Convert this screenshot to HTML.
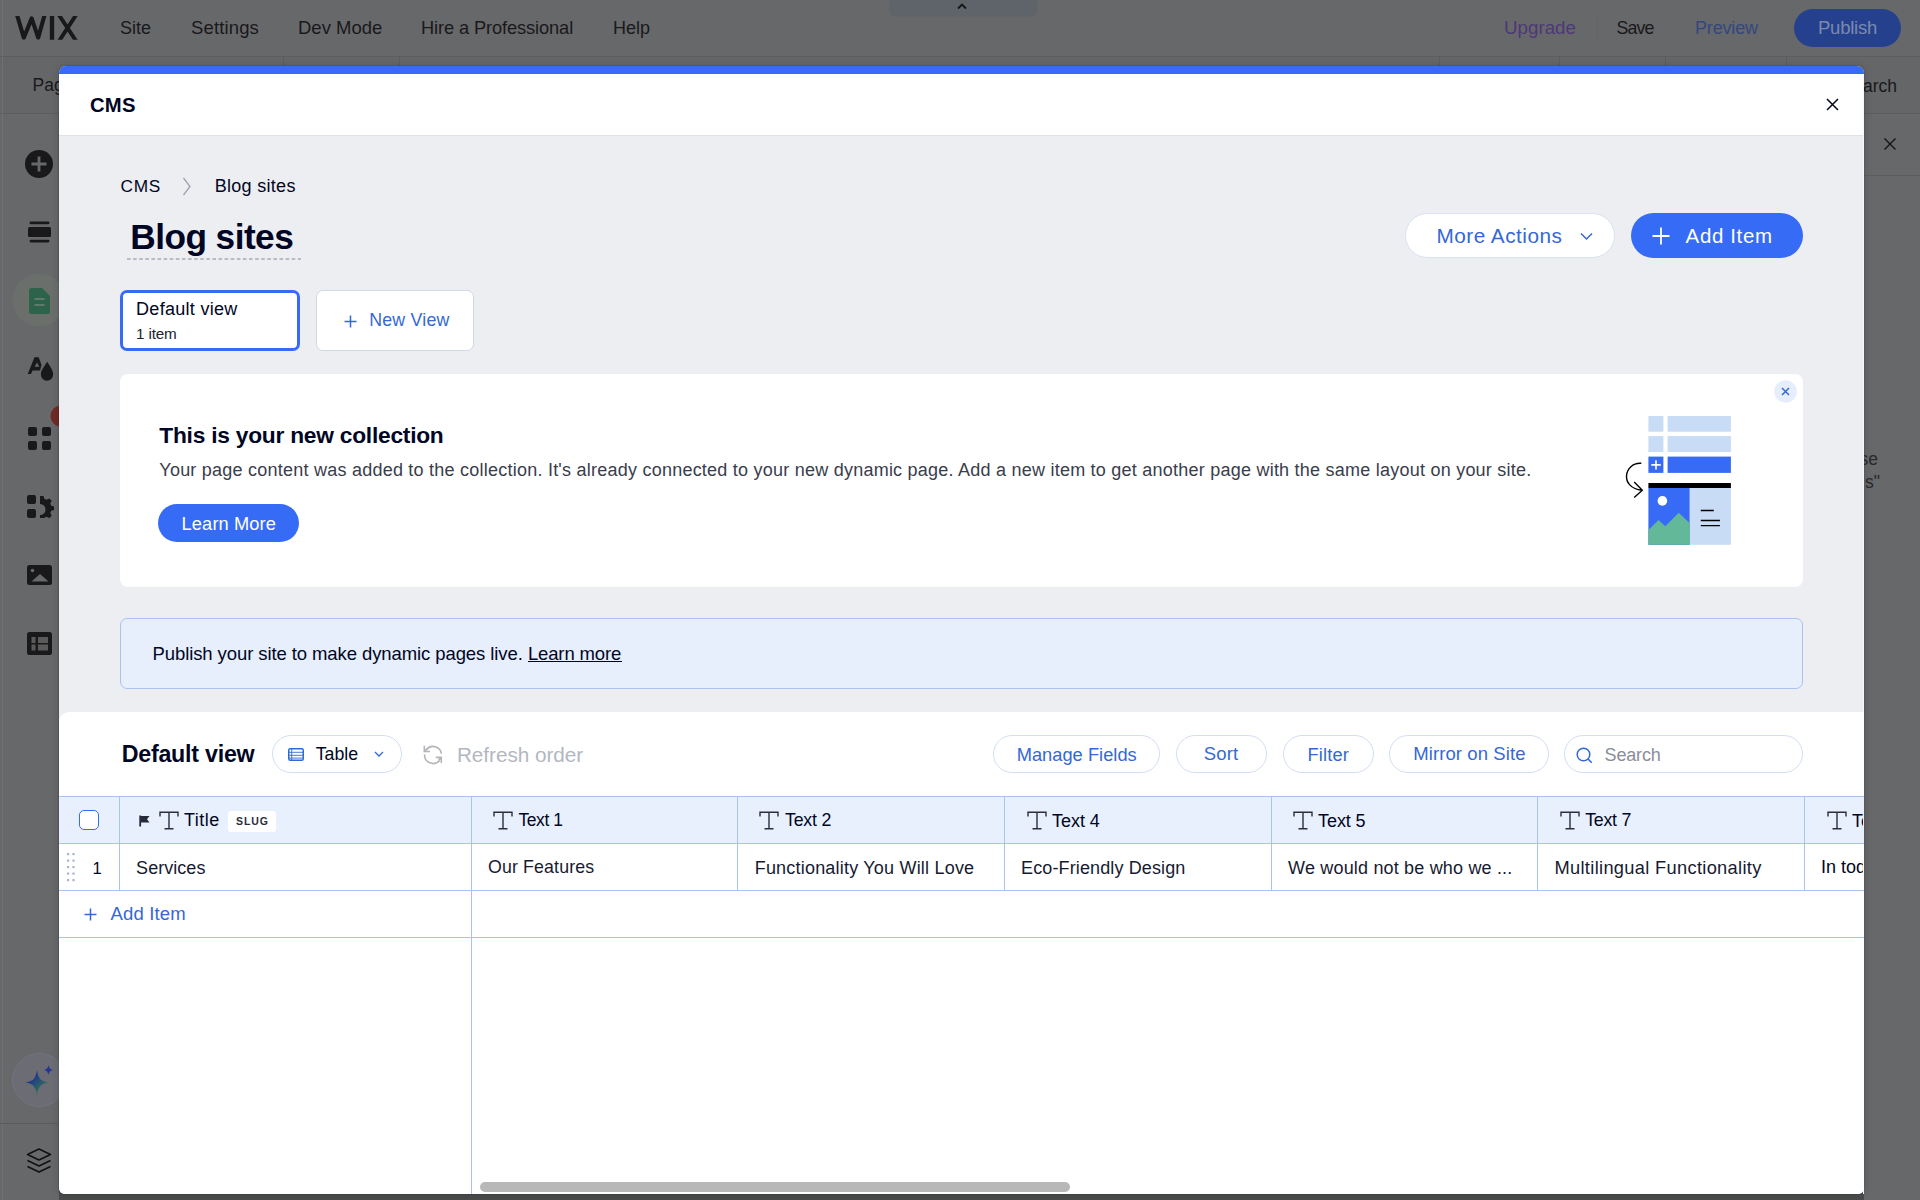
<!DOCTYPE html>
<html><head><meta charset="utf-8"><title>CMS</title>
<style>
*{margin:0;padding:0}
html,body{width:1920px;height:1200px;overflow:hidden}
body{position:relative;background:#6a6a6b;font-family:"Liberation Sans",sans-serif}
.r{position:absolute}
.t{position:absolute;white-space:nowrap;line-height:1}
</style></head><body>
<div class="r" style="left:0px;top:0px;width:1920px;height:1200px;background:#67686a;"></div>
<div class="r" style="left:0px;top:57px;width:1920px;height:56px;background:#656668;"></div>
<div class="r" style="left:0px;top:56px;width:1920px;height:1px;background:#5c5c5d;"></div>
<div class="r" style="left:0px;top:113px;width:1920px;height:1px;background:#5c5c5d;"></div>
<div class="r" style="left:2px;top:0px;width:1px;height:1200px;background:#6f7071;"></div>
<div class="r" style="left:58px;top:114px;width:1px;height:1080px;background:#636364;"></div>
<div class="r" style="left:283px;top:57px;width:1px;height:9px;background:#5c5c5d;"></div>
<div class="r" style="left:399px;top:57px;width:1px;height:9px;background:#5c5c5d;"></div>
<div class="r" style="left:1439px;top:57px;width:1px;height:9px;background:#5c5c5d;"></div>
<div class="r" style="left:1559px;top:57px;width:1px;height:9px;background:#5c5c5d;"></div>
<div class="r" style="left:1665px;top:57px;width:1px;height:9px;background:#5c5c5d;"></div>
<div class="r" style="left:1786px;top:57px;width:1px;height:9px;background:#5c5c5d;"></div>
<div class="r" style="left:1864px;top:175px;width:56px;height:1px;background:#5c5c5d;"></div>
<svg class="r" style="left:0px;top:0px" width="90" height="56"><defs><clipPath id="wc"><rect x="0" y="15.9" width="90" height="23.9"/></clipPath></defs><g clip-path="url(#wc)" stroke="#19191b" fill="none"><path d="M16.4 12.8L23.8 37.7L31.7 18.4L38.2 37.7L45.2 12.8" stroke-width="4.1" stroke-linejoin="round"/><path d="M52 10V45" stroke-width="4.3"/><path d="M57.4 12.6L77.4 43M77.6 12.6L57.8 43" stroke-width="3.9"/></g></svg>
<div class="t" style="left:120.00px;top:19.36px;font-size:18.0px;letter-spacing:0.000px;color:#19191b">Site</div>
<div class="t" style="left:191.00px;top:18.94px;font-size:18.5px;letter-spacing:0.143px;color:#19191b">Settings</div>
<div class="t" style="left:298.00px;top:18.94px;font-size:18.5px;letter-spacing:0.000px;color:#19191b">Dev Mode</div>
<div class="t" style="left:421.00px;top:19.15px;font-size:18.25px;letter-spacing:-0.111px;color:#19191b">Hire a Professional</div>
<div class="t" style="left:613.00px;top:19.36px;font-size:18.0px;letter-spacing:0.000px;color:#19191b">Help</div>
<div class="r" style="left:890px;top:0px;width:147px;height:16px;background:#5f636a;border-radius:0 0 7px 7px;box-shadow:0 0 0 1px #626569"></div>
<svg class="r" style="left:956px;top:2px" width="12" height="8"><path d="M2 6.5L6 2.5l4 4" stroke="#161616" stroke-width="1.8" fill="none"/></svg>
<div class="t" style="left:1504.00px;top:18.83px;font-size:18.75px;letter-spacing:0.000px;color:#4e3878">Upgrade</div>
<div class="r" style="left:1597px;top:12px;width:1px;height:32px;background:#646465;"></div>
<div class="t" style="left:1616.50px;top:19.67px;font-size:17.75px;letter-spacing:-0.833px;color:#19191b">Save</div>
<div class="t" style="left:1695.00px;top:19.46px;font-size:18.0px;letter-spacing:-0.167px;color:#33477e">Preview</div>
<div class="r" style="left:1794px;top:9px;width:107px;height:38px;background:#25418d;border-radius:19px"></div>
<div class="t" style="left:1818.00px;top:19.04px;font-size:18.5px;letter-spacing:-0.250px;color:#7b89b0">Publish</div>
<div class="t" style="left:32.50px;top:77.19px;font-size:17.5px;letter-spacing:0.000px;color:#19191b">Pag</div>
<div class="t" style="left:0.00px;top:77.69px;font-size:17.5px;letter-spacing:0.000px;color:#19191b;left:auto;right:23px">arch</div>
<svg class="r" style="left:1883px;top:137px" width="14" height="14"><path d="M1.5 1.5l11 11M12.5 1.5l-11 11" stroke="#151515" stroke-width="1.4"/></svg>
<div class="t" style="left:0.00px;top:451.19px;font-size:17.5px;letter-spacing:0.000px;color:#2a2a2c;left:auto;right:42px">se</div>
<div class="t" style="left:0.00px;top:474.19px;font-size:17.5px;letter-spacing:0.000px;color:#2a2a2c;left:auto;right:40px">s"</div>
<svg class="r" style="left:25px;top:150px" width="28" height="28"><circle cx="14" cy="14" r="14" fill="#19191b"/><path d="M14 6.5v15M6.5 14h15" stroke="#67686a" stroke-width="2.8"/></svg>
<svg class="r" style="left:28px;top:221px" width="23" height="22"><rect x="1.5" y="0.5" width="20" height="2.8" rx="1.4" fill="#19191b"/><rect x="0" y="6" width="23" height="10" rx="1.5" fill="#19191b"/><rect x="1.5" y="18.7" width="20" height="2.8" rx="1.4" fill="#19191b"/></svg>
<svg class="r" style="left:12px;top:273px" width="47" height="54"><circle cx="27" cy="27" r="26.5" fill="#6a6f6c"/></svg>
<svg class="r" style="left:29px;top:288px" width="21" height="26"><path d="M0 2.5a2.5 2.5 0 0 1 2.5-2.5h10.5l8 8v15.5a2.5 2.5 0 0 1-2.5 2.5h-16a2.5 2.5 0 0 1-2.5-2.5z" fill="#2d634a"/><path d="M5.5 11h10M5.5 17h10" stroke="#5f7a6c" stroke-width="2.2"/></svg>
<svg class="r" style="left:22px;top:350px" width="36" height="36"><path fill-rule="evenodd" d="M5.7 24L12.5 7.2H16.7L19.5 15L18 20.4H10.5L9 24Z M12.6 16.8L15 12.6L17.4 16.8Z" fill="#19191b"/><path d="M25.2 11.8C22 17 18.9 20.2 18.9 24.6A6.1 6.1 0 0 0 31.1 24.6C31.1 20.2 28.4 17 25.2 11.8Z" fill="#19191b"/></svg>
<svg class="r" style="left:50px;top:405px" width="9" height="22"><circle cx="11" cy="11" r="10.5" fill="#702a25"/></svg>
<svg class="r" style="left:28px;top:427px" width="23" height="23"><rect x="0" y="0" width="9" height="9" rx="2" fill="#19191b"/><rect x="14" y="0" width="9" height="9" rx="2" fill="#19191b"/><rect x="0" y="14" width="9" height="9" rx="2" fill="#19191b"/><rect x="14" y="14" width="9" height="9" rx="2" fill="#19191b"/></svg>
<svg class="r" style="left:26px;top:495px" width="28" height="23"><rect x="1" y="0" width="9" height="9" rx="2" fill="#19191b"/><rect x="1" y="14" width="9" height="9" rx="2" fill="#19191b"/><path d="M14 1h3.5l.8 2.8 2.4 1 2.6-1.4 2.4 2.4-1.4 2.6 1 2.4 2.8.8v3.3l-2.8.8-1 2.4 1.4 2.6-2.4 2.4-2.6-1.4-2.4 1-.8 2.8H14v-5.5a5.5 5.5 0 0 0 0-11z" fill="#19191b"/></svg>
<svg class="r" style="left:27px;top:565px" width="25" height="20"><rect x="0" y="0" width="25" height="20" rx="2.5" fill="#19191b"/><path d="M4.5 16.5l8.5-7.5 8.5 7.5z" fill="#67686a"/><circle cx="5.5" cy="5.5" r="1.8" fill="#67686a"/></svg>
<svg class="r" style="left:27px;top:632px" width="25" height="23"><rect x="0" y="0" width="25" height="23" rx="2.5" fill="#19191b"/><rect x="4.5" y="5" width="4" height="6" fill="#5a5a5b"/><rect x="11" y="5" width="10" height="6" fill="#5a5a5b"/><rect x="4.5" y="12.5" width="4" height="6" fill="#5a5a5b"/><rect x="11" y="12.5" width="10" height="6" fill="#5a5a5b"/></svg>
<div class="r" style="left:0px;top:1123px;width:59px;height:1px;background:#5c5c5d;"></div>
<svg class="r" style="left:12px;top:1053px" width="47" height="54"><circle cx="27" cy="27" r="26.5" fill="#6c6d74" stroke="#717380" stroke-width="1"/></svg>
<svg class="r" style="left:24px;top:1064px" width="32" height="34"><defs><linearGradient id="g1" x1="0" y1="0" x2="1" y2="1"><stop offset="0.25" stop-color="#1e2f90"/><stop offset="0.7" stop-color="#2f6a5e"/></linearGradient></defs><path d="M13 6c1.3 8.5 3.6 11 11.5 12.5-7.9 1.5-10.2 4-11.5 12.5-1.3-8.5-3.6-11-11.5-12.5 7.9-1.5 10.2-4 11.5-12.5z" fill="url(#g1)"/><path d="M24.5 1c.7 3.3 1.6 4.3 5 5-3.4.7-4.3 1.7-5 5-.7-3.3-1.6-4.3-5-5 3.4-.7 4.3-1.7 5-5z" fill="#1f3590"/></svg>
<svg class="r" style="left:26px;top:1148px" width="26" height="26"><path d="M1.5 6.5L13 1l11.5 5.5L13 12z" stroke="#111" stroke-width="1.5" fill="none" stroke-linejoin="round"/><path d="M1.5 12.5L13 18l11.5-5.5M1.5 18.5L13 24l11.5-5.5" stroke="#111" stroke-width="1.5" fill="none" stroke-linejoin="round"/></svg>
<div class="r" style="left:59px;top:1190px;width:1805px;height:10px;background:#4a4b4b;"></div>
<div class="r" style="left:59px;top:66px;width:1805px;height:1128px;background:#edeef1;border-radius:7px 7px 6px 6px;overflow:hidden;box-shadow:0 0 1.5px rgba(0,0,0,0.35),0 0 8px rgba(0,0,0,0.15)"></div>
<div class="r" style="left:59px;top:66px;width:1805px;height:9px;background:#356bf5;border-radius:7px 7px 0 0"></div>
<div class="r" style="left:59px;top:74px;width:1805px;height:61px;background:#ffffff;"></div>
<div class="r" style="left:59px;top:135px;width:1805px;height:1px;background:#dfe2e8;"></div>
<div class="r" style="left:1863px;top:75px;width:1px;height:1119px;background:#f6f7f9;"></div>
<div class="t" style="left:90.00px;top:94.86px;font-size:20.25px;letter-spacing:0.250px;color:#000624;font-weight:bold">CMS</div>
<svg class="r" style="left:1826px;top:98px" width="13" height="13"><path d="M1 1l11 11M12 1L1 12" stroke="#000624" stroke-width="1.5"/></svg>
<div class="t" style="left:120.40px;top:177.70px;font-size:17.25px;letter-spacing:0.800px;color:#000624">CMS</div>
<svg class="r" style="left:182px;top:177px" width="10" height="19"><path d="M1.5 1l6.5 8.5-6.5 8.5" stroke="#9ea3b3" stroke-width="1.3" fill="none"/></svg>
<div class="t" style="left:214.70px;top:177.06px;font-size:18.0px;letter-spacing:0.300px;color:#000624">Blog sites</div>
<div class="t" style="left:130.30px;top:219.16px;font-size:35.25px;letter-spacing:-0.556px;color:#000624;font-weight:bold">Blog sites</div>
<svg class="r" style="left:127px;top:258px" width="174" height="2"><line x1="0" y1="1" x2="174" y2="1" stroke="#a7abb9" stroke-width="1.4" stroke-dasharray="3.6 2.5"/></svg>
<div class="r" style="left:1405px;top:213px;width:210px;height:45px;background:#ffffff;border:1px solid #d9e1f3;border-radius:23px;box-sizing:border-box"></div>
<div class="t" style="left:1436.40px;top:226.04px;font-size:20.75px;letter-spacing:0.509px;color:#3468d6">More Actions</div>
<svg class="r" style="left:1580px;top:232px" width="13" height="9"><path d="M1 1.5l5.5 5.5 5.5-5.5" stroke="#3468d6" stroke-width="1.5" fill="none"/></svg>
<div class="r" style="left:1631px;top:213px;width:172px;height:45px;background:#356bf5;border-radius:23px"></div>
<svg class="r" style="left:1652px;top:227px" width="18" height="18"><path d="M9 0.5v17M0.5 9h17" stroke="#fff" stroke-width="1.8"/></svg>
<div class="t" style="left:1685.60px;top:225.65px;font-size:20.5px;letter-spacing:0.629px;color:#ffffff">Add Item</div>
<div class="r" style="left:120px;top:290px;width:180px;height:61px;background:#ffffff;border:3px solid #356bf5;border-radius:7px;box-sizing:border-box"></div>
<div class="t" style="left:136.10px;top:300.36px;font-size:18.0px;letter-spacing:0.282px;color:#000624">Default view</div>
<div class="t" style="left:136.00px;top:326.49px;font-size:15.25px;letter-spacing:-0.140px;color:#20232e">1 item</div>
<div class="r" style="left:316px;top:290px;width:158px;height:61px;background:#ffffff;border:1px solid #d3d8e4;border-radius:7px;box-sizing:border-box"></div>
<svg class="r" style="left:344px;top:315px" width="13" height="13"><path d="M6.5 0.5v12M0.5 6.5h12" stroke="#3468d6" stroke-width="1.5"/></svg>
<div class="t" style="left:369.20px;top:312.07px;font-size:17.75px;letter-spacing:0.229px;color:#3468d6">New View</div>
<div class="r" style="left:120px;top:374px;width:1683px;height:213px;background:#ffffff;border-radius:8px"></div>
<div class="t" style="left:159.30px;top:424.24px;font-size:22.75px;letter-spacing:-0.242px;color:#000624;font-weight:bold">This is your new collection</div>
<div class="t" style="left:159.30px;top:460.76px;font-size:18.0px;letter-spacing:0.234px;color:#393d4c">Your page content was added to the collection. It's already connected to your new dynamic page. Add a new item to get another page with the same layout on your site.</div>
<div class="r" style="left:158px;top:504px;width:141px;height:38px;background:#356bf5;border-radius:19px"></div>
<div class="t" style="left:181.60px;top:514.85px;font-size:18.25px;letter-spacing:0.111px;color:#ffffff">Learn More</div>
<svg class="r" style="left:1774px;top:380px" width="23" height="23"><circle cx="11.5" cy="11.5" r="11.3" fill="#e6edfc"/><path d="M8 8l7 7M15 8l-7 7" stroke="#3468d6" stroke-width="1.5"/></svg>
<svg class="r" style="left:1620px;top:410px" width="115" height="140" viewBox="1620 410 115 140">
<rect x="1648.4" y="416" width="15" height="15.7" fill="#c8dcf6"/><rect x="1667.6" y="416" width="63.3" height="15.7" fill="#c8dcf6"/>
<rect x="1648.4" y="436.1" width="15" height="15.9" fill="#c8dcf6"/><rect x="1667.6" y="436.1" width="63.3" height="15.9" fill="#c8dcf6"/>
<rect x="1648.4" y="456.6" width="15" height="16.3" fill="#386bf5"/><rect x="1667.6" y="456.6" width="63.3" height="16.3" fill="#386bf5"/>
<path d="M1656 460.2v9.4M1651.3 464.9h9.4" stroke="#fff" stroke-width="1.6"/>
<rect x="1648.4" y="483" width="82.5" height="5" fill="#000"/>
<rect x="1648.4" y="488" width="41.4" height="56.8" fill="#386bf5"/><rect x="1689.8" y="488" width="41.1" height="56.8" fill="#c8dcf6"/>
<path d="M1648.4 530L1658.6 520 1665.3 526.2 1678.7 512.8 1689.8 523.3V544.8H1648.4z" fill="#62b899"/>
<circle cx="1662.4" cy="500.9" r="4.8" fill="#fff"/>
<path d="M1700.8 510.5h13M1700.8 520.5h19.1M1700.8 525.6h19.1" stroke="#000" stroke-width="1.3"/>
<path d="M1641.3 463.3C1624 462 1619 488 1642 490.2M1634.2 482.1l8.1 8.1-8.1 7.3" stroke="#000" stroke-width="1.4" fill="none"/>
</svg>
<div class="r" style="left:120px;top:618px;width:1683px;height:71px;background:#e7eefc;border:1px solid #aac3ef;border-radius:7px;box-sizing:border-box"></div>
<div class="t" style="left:152.50px;top:645.14px;font-size:18.5px;letter-spacing:-0.091px;color:#000624">Publish your site to make dynamic pages live.</div>
<div class="t" style="left:527.90px;top:645.14px;font-size:18.5px;letter-spacing:-0.133px;color:#000624">Learn more</div>
<div class="r" style="left:528px;top:660.5px;width:94px;height:1.6px;background:#000624;"></div>
<div class="r" style="left:59px;top:712px;width:1805px;height:482px;background:#ffffff;border-radius:10px 0 6px 6px"></div>
<div class="r" style="left:1863px;top:712px;width:1px;height:476px;background:#ffffff;"></div>
<div class="t" style="left:121.70px;top:743.12px;font-size:23.25px;letter-spacing:-0.245px;color:#000624;font-weight:bold">Default view</div>
<div class="r" style="left:272px;top:735px;width:130px;height:38px;background:#ffffff;border:1px solid #d3def5;border-radius:19px;box-sizing:border-box"></div>
<svg class="r" style="left:288px;top:748px" width="16" height="13"><rect x="0.75" y="0.75" width="14.5" height="11.5" rx="1.5" stroke="#3468d6" stroke-width="1.5" fill="none"/><path d="M0.75 4.3h14.5M0.75 7.3h14.5M0.75 10.1h14.5M3.7 0.75v11.5" stroke="#3468d6" stroke-width="0.9"/></svg>
<div class="t" style="left:315.70px;top:746.27px;font-size:17.75px;letter-spacing:0.000px;color:#000624">Table</div>
<svg class="r" style="left:374px;top:751px" width="10" height="7"><path d="M1 1l4 4 4-4" stroke="#3468d6" stroke-width="1.3" fill="none"/></svg>
<svg class="r" style="left:418px;top:740px" width="30" height="28"><g stroke="#b4b5b8" stroke-width="1.6" fill="none"><path d="M8.6 9.4A8.5 8.5 0 0 1 23.4 13.6"/><path d="M6.6 14.4A8.5 8.5 0 0 0 21.6 20.4"/><path d="M6.3 5.8V11.5H12M6.3 11.5L9.3 8.6"/><path d="M17.8 17.4H23.3V23M23.3 17.4L20.6 20.4"/></g></svg>
<div class="t" style="left:456.90px;top:744.64px;font-size:20.75px;letter-spacing:-0.042px;color:#b3b7c1">Refresh order</div>
<div class="r" style="left:993px;top:735px;width:167px;height:38px;background:#ffffff;border:1px solid #d3def5;border-radius:19px;box-sizing:border-box"></div>
<div class="t" style="left:1016.70px;top:745.55px;font-size:18.25px;letter-spacing:0.025px;color:#3468d6">Manage Fields</div>
<div class="r" style="left:1176px;top:735px;width:91px;height:38px;background:#ffffff;border:1px solid #d3def5;border-radius:19px;box-sizing:border-box"></div>
<div class="t" style="left:1203.75px;top:745.34px;font-size:18.5px;letter-spacing:0.150px;color:#3468d6">Sort</div>
<div class="r" style="left:1283px;top:735px;width:91px;height:38px;background:#ffffff;border:1px solid #d3def5;border-radius:19px;box-sizing:border-box"></div>
<div class="t" style="left:1307.50px;top:745.55px;font-size:18.25px;letter-spacing:0.140px;color:#3468d6">Filter</div>
<div class="r" style="left:1389px;top:735px;width:160px;height:38px;background:#ffffff;border:1px solid #d3def5;border-radius:19px;box-sizing:border-box"></div>
<div class="t" style="left:1413.20px;top:745.34px;font-size:18.5px;letter-spacing:0.100px;color:#3468d6">Mirror on Site</div>
<div class="r" style="left:1564px;top:735px;width:239px;height:38px;background:#ffffff;border:1px solid #d3def5;border-radius:19px;box-sizing:border-box"></div>
<svg class="r" style="left:1576px;top:747px" width="17" height="16"><circle cx="7.5" cy="7.5" r="6.3" stroke="#3468d6" stroke-width="1.5" fill="none"/><path d="M12 12l3.8 3.8" stroke="#3468d6" stroke-width="1.5"/></svg>
<div class="t" style="left:1604.60px;top:745.76px;font-size:18.0px;letter-spacing:-0.180px;color:#8a8e9b">Search</div>
<div class="r" style="left:59px;top:797px;width:1805px;height:47px;background:#e8f0fd;"></div>
<div class="r" style="left:59px;top:796px;width:1805px;height:1px;background:#a8c3ef;"></div>
<div class="r" style="left:59px;top:843px;width:1805px;height:1px;background:#a8c3ef;"></div>
<div class="r" style="left:59px;top:890px;width:1805px;height:1px;background:#a8c3ef;"></div>
<div class="r" style="left:59px;top:937px;width:1805px;height:1px;background:#a8c3ef;"></div>
<div class="r" style="left:119px;top:797px;width:1px;height:94px;background:#a8c3ef;"></div>
<div class="r" style="left:471px;top:797px;width:1px;height:397px;background:#a8c3ef;"></div>
<div class="r" style="left:737px;top:797px;width:1px;height:94px;background:#a8c3ef;"></div>
<div class="r" style="left:1004px;top:797px;width:1px;height:94px;background:#a8c3ef;"></div>
<div class="r" style="left:1271px;top:797px;width:1px;height:94px;background:#a8c3ef;"></div>
<div class="r" style="left:1537px;top:797px;width:1px;height:94px;background:#a8c3ef;"></div>
<div class="r" style="left:1804px;top:797px;width:1px;height:94px;background:#a8c3ef;"></div>
<div class="r" style="left:79px;top:810px;width:20px;height:20px;background:#ffffff;border:1.5px solid #356bf5;border-radius:5px;box-sizing:border-box"></div>
<svg class="r" style="left:139px;top:815px" width="11" height="12"><path d="M1.2 0.5v11" stroke="#262a3a" stroke-width="1.8"/><path d="M2 1h8.5l-2.5 3.2 2.5 3.2H2z" fill="#262a3a"/></svg>
<svg class="r" style="left:159px;top:811px" width="20" height="19"><path d="M1 5.5V1.2h18V5.5M10 1.2v16.6M5.5 17.8h9" stroke="#2a2e3d" stroke-width="1.4" fill="none"/></svg>
<div class="t" style="left:184.00px;top:811.36px;font-size:18.0px;letter-spacing:0.500px;color:#000624">Title</div>
<div class="r" style="left:228px;top:811px;width:48px;height:21px;background:#ffffff;border-radius:3px"></div>
<div class="t" style="left:236.00px;top:816.01px;font-size:10.5px;letter-spacing:0.900px;color:#2a2e3d;font-weight:bold">SLUG</div>
<svg class="r" style="left:493px;top:811px" width="20" height="19"><path d="M1 5.5V1.2h18V5.5M10 1.2v16.6M5.5 17.8h9" stroke="#2a2e3d" stroke-width="1.4" fill="none"/></svg>
<div class="t" style="left:518.40px;top:811.99px;font-size:17.5px;letter-spacing:-0.400px;color:#000624">Text 1</div>
<svg class="r" style="left:759.4px;top:811px" width="20" height="19"><path d="M1 5.5V1.2h18V5.5M10 1.2v16.6M5.5 17.8h9" stroke="#2a2e3d" stroke-width="1.4" fill="none"/></svg>
<div class="t" style="left:785.00px;top:811.77px;font-size:17.75px;letter-spacing:-0.220px;color:#000624">Text 2</div>
<svg class="r" style="left:1026.6px;top:811px" width="20" height="19"><path d="M1 5.5V1.2h18V5.5M10 1.2v16.6M5.5 17.8h9" stroke="#2a2e3d" stroke-width="1.4" fill="none"/></svg>
<div class="t" style="left:1052.00px;top:811.56px;font-size:18.0px;letter-spacing:-0.040px;color:#000624">Text 4</div>
<svg class="r" style="left:1293px;top:811px" width="20" height="19"><path d="M1 5.5V1.2h18V5.5M10 1.2v16.6M5.5 17.8h9" stroke="#2a2e3d" stroke-width="1.4" fill="none"/></svg>
<div class="t" style="left:1318.10px;top:811.56px;font-size:18.0px;letter-spacing:-0.100px;color:#000624">Text 5</div>
<svg class="r" style="left:1560.3px;top:811px" width="20" height="19"><path d="M1 5.5V1.2h18V5.5M10 1.2v16.6M5.5 17.8h9" stroke="#2a2e3d" stroke-width="1.4" fill="none"/></svg>
<div class="t" style="left:1585.20px;top:811.77px;font-size:17.75px;letter-spacing:-0.240px;color:#000624">Text 7</div>
<svg class="r" style="left:1827.3px;top:811px" width="20" height="19"><path d="M1 5.5V1.2h18V5.5M10 1.2v16.6M5.5 17.8h9" stroke="#2a2e3d" stroke-width="1.4" fill="none"/></svg>
<div class="r" style="left:1800px;top:790px;width:63px;height:100px;overflow:hidden"><div class="t" style="left:52.00px;top:21.56px;font-size:18.0px;letter-spacing:0.000px;color:#000624">Text 8</div>
</div>
<svg class="r" style="left:66.5px;top:853px" width="8" height="29"><rect x="0" y="0" width="2.2" height="2.2" fill="#a9b3cc"/><rect x="0" y="6.5" width="2.2" height="2.2" fill="#a9b3cc"/><rect x="0" y="13" width="2.2" height="2.2" fill="#a9b3cc"/><rect x="0" y="19.5" width="2.2" height="2.2" fill="#a9b3cc"/><rect x="0" y="26" width="2.2" height="2.2" fill="#a9b3cc"/><rect x="5.4" y="0" width="2.2" height="2.2" fill="#a9b3cc"/><rect x="5.4" y="6.5" width="2.2" height="2.2" fill="#a9b3cc"/><rect x="5.4" y="13" width="2.2" height="2.2" fill="#a9b3cc"/><rect x="5.4" y="19.5" width="2.2" height="2.2" fill="#a9b3cc"/><rect x="5.4" y="26" width="2.2" height="2.2" fill="#a9b3cc"/></svg>
<div class="t" style="left:92.50px;top:859.83px;font-size:16.5px;letter-spacing:0.000px;color:#000624">1</div>
<div class="t" style="left:136.10px;top:858.76px;font-size:18.0px;letter-spacing:0.043px;color:#161a30">Services</div>
<div class="t" style="left:488.00px;top:858.97px;font-size:17.75px;letter-spacing:0.136px;color:#161a30">Our Features</div>
<div class="t" style="left:754.70px;top:858.76px;font-size:18.0px;letter-spacing:0.204px;color:#161a30">Functionality You Will Love</div>
<div class="t" style="left:1021.00px;top:858.76px;font-size:18.0px;letter-spacing:0.128px;color:#161a30">Eco-Friendly Design</div>
<div class="t" style="left:1288.10px;top:858.76px;font-size:18.0px;letter-spacing:0.176px;color:#161a30">We would not be who we ...</div>
<div class="t" style="left:1554.50px;top:858.55px;font-size:18.25px;letter-spacing:0.320px;color:#161a30">Multilingual Functionality</div>
<div class="r" style="left:1805px;top:844px;width:58px;height:46px;overflow:hidden"><div class="t" style="left:15.90px;top:14.36px;font-size:18.0px;letter-spacing:0.000px;color:#000624">In today</div>
</div>
<svg class="r" style="left:84px;top:908px" width="13" height="13"><path d="M6.5 0.5v12M0.5 6.5h12" stroke="#3468d6" stroke-width="1.5"/></svg>
<div class="t" style="left:110.60px;top:905.34px;font-size:18.5px;letter-spacing:0.143px;color:#3468d6">Add Item</div>
<div class="r" style="left:480px;top:1182px;width:590px;height:10px;background:#b8b8b8;border-radius:5px"></div>
</body></html>
